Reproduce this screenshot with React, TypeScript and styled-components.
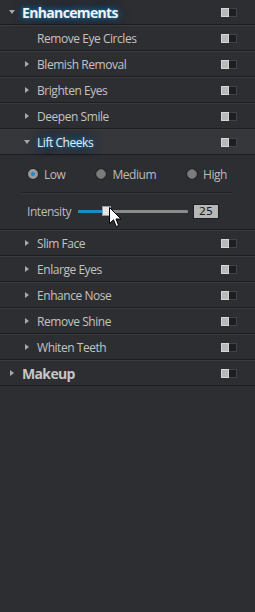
import React from "react"
import styled, { createGlobalStyle } from "styled-components"

const GlobalStyle = createGlobalStyle`
    html, body {
        margin: 0;
        padding: 0;
        background: #2d2e32;
    }
    body {
        font-family: "Open Sans", "Liberation Sans", sans-serif;
        -webkit-font-smoothing: antialiased;
    }
`

const Panel = styled.div`
    position: relative;
    width: 255px;
    height: 612px;
    background: #2d2e32;
    display: flex;
    flex-direction: column;
    overflow: hidden;
`

const Item = styled.div<{ $first?: boolean; $active?: boolean }>`
    display: flex;
    align-items: center;
    height: 24px;
    flex: none;
    border-top: ${(p) => (p.$first ? "none" : "1px solid #3a3b3f")};
    border-bottom: 1px solid #1c1d20;
    background: ${(p) => (p.$active ? "#36373b" : "#2d2e32")};
    padding-right: 18px;
`

const CaretSlot = styled.div<{ $indent: number }>`
    width: 12px;
    margin-left: ${(p) => p.$indent}px;
    display: flex;
    align-items: center;
    justify-content: flex-start;
    flex: none;
`

const CaretRight = styled.span`
    width: 0;
    height: 0;
    border-top: 3px solid transparent;
    border-bottom: 3px solid transparent;
    border-left: 4px solid #a9a9a9;
`

const CaretDown = styled.span`
    width: 0;
    height: 0;
    border-left: 3px solid transparent;
    border-right: 3px solid transparent;
    border-top: 4px solid #a9a9a9;
    margin-left: -1px;
`

const glow = "0 0 3px #1f6aa0, 0 0 6px #1d5f8e, 0 0 9px #1a4f78, 0 0 12px #173f5f"

const Label = styled.span<{ $glow?: boolean }>`
    flex: 1;
    font-size: 12px;
    color: ${(p) => (p.$glow ? "#eaeaea" : "#c3c3c3")};
    white-space: nowrap;
    letter-spacing: -0.45px;
    text-shadow: ${(p) => (p.$glow ? glow : "none")};
`

const Title = styled.span<{ $glow?: boolean }>`
    flex: 1;
    font-size: 14px;
    font-weight: 700;
    letter-spacing: -0.65px;
    color: ${(p) => (p.$glow ? "#f2f2f2" : "#c6c6c6")};
    white-space: nowrap;
    text-shadow: ${(p) => (p.$glow ? glow : "none")};
`

const Toggle = styled.div`
    display: flex;
    width: 16px;
    height: 9px;
    background: #1d1e21;
    border: 1px solid #414246;
    border-left: none;
    box-sizing: border-box;
    flex: none;
`

const Knob = styled.div`
    width: 8px;
    margin-top: -1px;
    height: 9px;
    background: #b9b9b9;
    box-shadow: inset 0 0 0 1px #d6d6d6;
`

const Expanded = styled.div`
    display: flex;
    flex-direction: column;
    padding: 10px 0 9px;
    border-bottom: 1px solid #1c1d20;
    flex: none;
`

const RadioRow = styled.div`
    display: flex;
    justify-content: space-between;
    align-items: center;
    height: 18px;
    padding: 0 28px 0 28px;
`

const RadioItem = styled.label`
    display: flex;
    align-items: center;
    gap: 6px;
    font-size: 12px;
    color: #bcbcbc;
    letter-spacing: -0.45px;
`

const RadioDot = styled.span<{ $on?: boolean }>`
    width: 10px;
    height: 10px;
    border-radius: 50%;
    box-sizing: border-box;
    background: ${(p) => (p.$on ? "#1d8acb" : "#7c7c7c")};
    border: ${(p) => (p.$on ? "3px solid #9a9a9a" : "1px solid #6a6a6a")};
    box-shadow: 0 0 0 1px #242528;
`

const Separator = styled.div`
    height: 1px;
    margin: 9px 22px 0;
    background: #202124;
    border-bottom: 1px solid #37383c;
`

const SliderRow = styled.div`
    display: flex;
    align-items: center;
    height: 18px;
    margin-top: 8px;
    padding-left: 27px;
`

const SliderLabel = styled.span`
    font-size: 12px;
    color: #bcbcbc;
    width: 51px;
    letter-spacing: -0.45px;
`

const Track = styled.div`
    position: relative;
    width: 110px;
    height: 3px;
    background: #8b8b8b;
    border-radius: 1px;
`

const Fill = styled.div`
    height: 100%;
    background: #1b8ac9;
`

const Thumb = styled.div`
    position: absolute;
    top: -4px;
    width: 9px;
    height: 10px;
    background: #e4e4e4;
    border: 1px solid #9a9a9a;
    box-sizing: border-box;
`

const ValueBox = styled.div`
    margin-left: 5px;
    width: 26px;
    height: 15px;
    box-sizing: border-box;
    background: #b7b7b7;
    border: 1px solid #1e1f22;
    font-size: 11px;
    color: #202020;
    display: flex;
    align-items: center;
    justify-content: center;
    font-family: "DejaVu Sans", sans-serif;
`

const Cursor = styled.svg`
    position: absolute;
    left: 109px;
    top: 207px;
`

const subItems = ["Slim Face", "Enlarge Eyes", "Enhance Nose", "Remove Shine", "Whiten Teeth"]

const Switch = () => (
    <Toggle>
        <Knob />
    </Toggle>
)

export default function App() {
    const value = 25
    return (
        <>
            <GlobalStyle />
            <Panel>
                <Item $first>
                    <CaretSlot $indent={10}>
                        <CaretDown />
                    </CaretSlot>
                    <Title $glow>Enhancements</Title>
                    <Switch />
                </Item>
                <Item>
                    <CaretSlot $indent={25} />
                    <Label>Remove Eye Circles</Label>
                    <Switch />
                </Item>
                {["Blemish Removal", "Brighten Eyes", "Deepen Smile"].map((name) => (
                    <Item key={name}>
                        <CaretSlot $indent={25}>
                            <CaretRight />
                        </CaretSlot>
                        <Label>{name}</Label>
                        <Switch />
                    </Item>
                ))}
                <Item $active>
                    <CaretSlot $indent={25}>
                        <CaretDown />
                    </CaretSlot>
                    <Label $glow>Lift Cheeks</Label>
                    <Switch />
                </Item>
                <Expanded>
                    <RadioRow>
                        <RadioItem>
                            <RadioDot $on />
                            Low
                        </RadioItem>
                        <RadioItem>
                            <RadioDot />
                            Medium
                        </RadioItem>
                        <RadioItem>
                            <RadioDot />
                            High
                        </RadioItem>
                    </RadioRow>
                    <Separator />
                    <SliderRow>
                        <SliderLabel>Intensity</SliderLabel>
                        <Track>
                            <Fill style={{ width: value }} />
                            <Thumb style={{ left: value - 1 }} />
                        </Track>
                        <ValueBox>{value}</ValueBox>
                    </SliderRow>
                </Expanded>
                {subItems.map((name) => (
                    <Item key={name}>
                        <CaretSlot $indent={25}>
                            <CaretRight />
                        </CaretSlot>
                        <Label>{name}</Label>
                        <Switch />
                    </Item>
                ))}
                <Item>
                    <CaretSlot $indent={10}>
                        <CaretRight />
                    </CaretSlot>
                    <Title>Makeup</Title>
                    <Switch />
                </Item>
                <Cursor width="13" height="21" viewBox="0 0 13 21">
                    <path
                        d="M0.5 0.5 L0.5 16.5 L4.5 12.8 L7.2 19.5 L9.6 18.5 L7 12 L12 12 Z"
                        fill="#ffffff"
                        stroke="#000000"
                        strokeWidth="1"
                        strokeLinejoin="miter"
                    />
                </Cursor>
            </Panel>
        </>
    )
}
